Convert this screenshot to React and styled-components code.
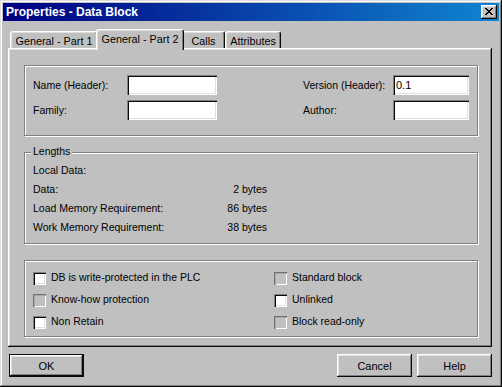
import React from "react";
import styled, { createGlobalStyle, css } from "styled-components";

const GlobalStyle = createGlobalStyle`
  html, body { margin: 0; padding: 0; background: #c0c0c0; }
  body {
    font-family: "Liberation Sans", Arial, sans-serif;
    font-size: 10.5px;
    color: #000;
  }
  * { box-sizing: border-box; }
`;

const sunken = css`
  box-shadow: inset 1px 1px #808080, inset 2px 2px #0a0a0a,
    inset -1px -1px #ffffff, inset -2px -2px #dfdfdf;
`;

const raised = css`
  box-shadow: inset -1px -1px #0a0a0a, inset 1px 1px #ffffff,
    inset -2px -2px #808080, inset 2px 2px #dfdfdf;
`;

const Window = styled.div`
  width: 502px;
  height: 387px;
  padding: 3px;
  background: #c0c0c0;
  box-shadow: inset -1px -1px #0a0a0a, inset 1px 1px #dfdfdf,
    inset -2px -2px #808080, inset 2px 2px #ffffff;
  display: flex;
  flex-direction: column;
`;

const TitleBar = styled.div`
  height: 18px;
  flex: none;
  display: flex;
  align-items: center;
  justify-content: space-between;
  padding: 0 2px 0 3px;
  background: linear-gradient(90deg, #000080, #1084d0);
  color: #fff;
  font-weight: bold;
  font-size: 12px;
`;

const CloseButton = styled.div`
  width: 16px;
  height: 14px;
  background: #c0c0c0;
  ${raised};
  display: flex;
  align-items: flex-start;
  justify-content: center;
  padding-top: 3px;
`;

const Body = styled.div`
  flex: 1;
  display: flex;
  flex-direction: column;
  padding: 8px 7px 7px 5px;
`;

const TabStrip = styled.div`
  height: 19px;
  flex: none;
  display: flex;
  align-items: flex-end;
  padding-left: 2px;
`;

const Tab = styled.div`
  position: relative;
  width: ${(p) => p.$w}px;
  height: 17px;
  padding-top: 1px;
  display: flex;
  align-items: center;
  justify-content: center;
  background: #c0c0c0;
  border: 1px solid;
  border-bottom: none;
  border-color: #ffffff #0a0a0a transparent #ffffff;
  border-radius: 3px 3px 0 0;
  box-shadow: inset -1px 0 #808080, inset 1px 1px #dfdfdf;
  white-space: nowrap;
  font-size: 10.8px;
  ${(p) =>
    p.$active &&
    css`
      z-index: 2;
      width: ${p.$w + 4}px;
      height: 21px;
      margin: 0 -2px -2px;
      padding-top: 0;
      padding-bottom: 3px;
    `}
`;

const Panel = styled.div`
  height: 299px;
  flex: none;
  background: #c0c0c0;
  ${raised};
  padding: 17px 14px 10px 16px;
  display: flex;
  flex-direction: column;
  gap: 16px;
`;

const Group = styled.div`
  position: relative;
  border: 1px solid #808080;
  box-shadow: inset 1px 1px #ffffff, 1px 1px #ffffff;
  padding: ${(p) => p.$pad};
`;

const GroupTitle = styled.span`
  position: absolute;
  top: -8px;
  left: 6px;
  padding: 0 2px;
  line-height: 13px;
  background: #c0c0c0;
`;

const HeaderGrid = styled.div`
  display: grid;
  grid-template-columns: 94px 90px 1fr 90px 76px;
  grid-auto-rows: 20px;
  row-gap: 5px;
  align-items: center;
`;

const Label = styled.span`
  white-space: nowrap;
  grid-column: ${(p) => p.$col || "auto"};
`;

const TextField = styled.input`
  width: 100%;
  height: 20px;
  border: none;
  outline: none;
  margin: 0;
  padding: 0 3px;
  background: #fff;
  font: inherit;
  font-size: 11px;
  color: #000;
  ${sunken};
  grid-column: ${(p) => p.$col || "auto"};
`;

const LengthGrid = styled.div`
  display: grid;
  grid-template-columns: 170px 64px;
  grid-auto-rows: 19px;
  align-items: center;
`;

const Value = styled.span`
  text-align: right;
  white-space: nowrap;
`;

const CheckGrid = styled.div`
  display: grid;
  grid-template-columns: 241px 1fr;
  grid-auto-rows: 13px;
  row-gap: 9px;
`;

const CheckItem = styled.label`
  display: flex;
  align-items: center;
  gap: 5px;
  height: 13px;
  white-space: nowrap;
  grid-column: ${(p) => p.$col};
`;

const CheckText = styled.span`
  line-height: 13px;
  margin-top: -2px;
`;

const CheckBox = styled.span`
  flex: none;
  width: 13px;
  height: 13px;
  background: ${(p) => (p.$disabled ? "#c0c0c0" : "#ffffff")};
  ${(p) =>
    p.$disabled
      ? css`
          box-shadow: inset 1px 1px #707070, inset 2px 2px #a8a8a8,
            inset -1px -1px #ffffff;
        `
      : sunken};
`;

const ButtonRow = styled.div`
  margin-top: 7px;
  display: flex;
  align-items: center;
  padding-left: 1px;
`;

const Button = styled.div`
  width: 75px;
  height: 23px;
  display: flex;
  align-items: center;
  justify-content: center;
  background: #c0c0c0;
  font-size: 11px;
  ${raised};
  margin-left: ${(p) => p.$ml || 0}px;
  ${(p) =>
    p.$default &&
    css`
      border: 1px solid #0a0a0a;
    `}
`;

const Spacer = styled.div`
  flex: 1;
`;

const CloseGlyph = () => (
  <svg width="8" height="7" viewBox="0 0 8 7" shapeRendering="crispEdges">
    <path
      fill="#000"
      d="M0 0h2v1H0zM6 0h2v1H6zM1 1h2v1H1zM5 1h2v1H5zM2 2h4v1H2zM3 3h2v1H3zM2 4h4v1H2zM1 5h2v1H1zM5 5h2v1H5zM0 6h2v1H0zM6 6h2v1H6z"
    />
  </svg>
);

const tabs = [
  { label: "General - Part 1", w: 88 },
  { label: "General - Part 2", w: 84, active: true },
  { label: "Calls", w: 43 },
  { label: "Attributes", w: 56 },
];

const lengths = [
  ["Local Data:", ""],
  ["Data:", "2 bytes"],
  ["Load Memory Requirement:", "86 bytes"],
  ["Work Memory Requirement:", "38 bytes"],
];

const checks = [
  { label: "DB is write-protected in the PLC", col: 1 },
  { label: "Standard block", col: 2, disabled: true },
  { label: "Know-how protection", col: 1, disabled: true },
  { label: "Unlinked", col: 2 },
  { label: "Non Retain", col: 1 },
  { label: "Block read-only", col: 2, disabled: true },
];

export default function App() {
  return (
    <>
      <GlobalStyle />
      <Window>
        <TitleBar>
          <span>Properties - Data Block</span>
          <CloseButton>
            <CloseGlyph />
          </CloseButton>
        </TitleBar>
        <Body>
          <TabStrip>
            {tabs.map((t) => (
              <Tab key={t.label} $w={t.w} $active={t.active}>
                {t.label}
              </Tab>
            ))}
          </TabStrip>
          <Panel>
            <Group $pad="9px 8px 15px 8px">
              <HeaderGrid>
                <Label>Name (Header):</Label>
                <TextField defaultValue="" />
                <Label $col="4">Version (Header):</Label>
                <TextField defaultValue="0.1" />
                <Label>Family:</Label>
                <TextField defaultValue="" />
                <Label $col="4">Author:</Label>
                <TextField defaultValue="" />
              </HeaderGrid>
            </Group>
            <Group $pad="7px 8px 7px 8px">
              <GroupTitle>Lengths</GroupTitle>
              <LengthGrid>
                {lengths.map(([l, v]) => (
                  <React.Fragment key={l}>
                    <Label>{l}</Label>
                    <Value>{v}</Value>
                  </React.Fragment>
                ))}
              </LengthGrid>
            </Group>
            <Group $pad="11px 8px 7px 8px">
              <CheckGrid>
                {checks.map((c) => (
                  <CheckItem key={c.label} $col={c.col}>
                    <CheckBox $disabled={c.disabled} />
                    <CheckText>{c.label}</CheckText>
                  </CheckItem>
                ))}
              </CheckGrid>
            </Group>
          </Panel>
          <ButtonRow>
            <Button $default>OK</Button>
            <Spacer />
            <Button>Cancel</Button>
            <Button $ml={5}>Help</Button>
          </ButtonRow>
        </Body>
      </Window>
    </>
  );
}
